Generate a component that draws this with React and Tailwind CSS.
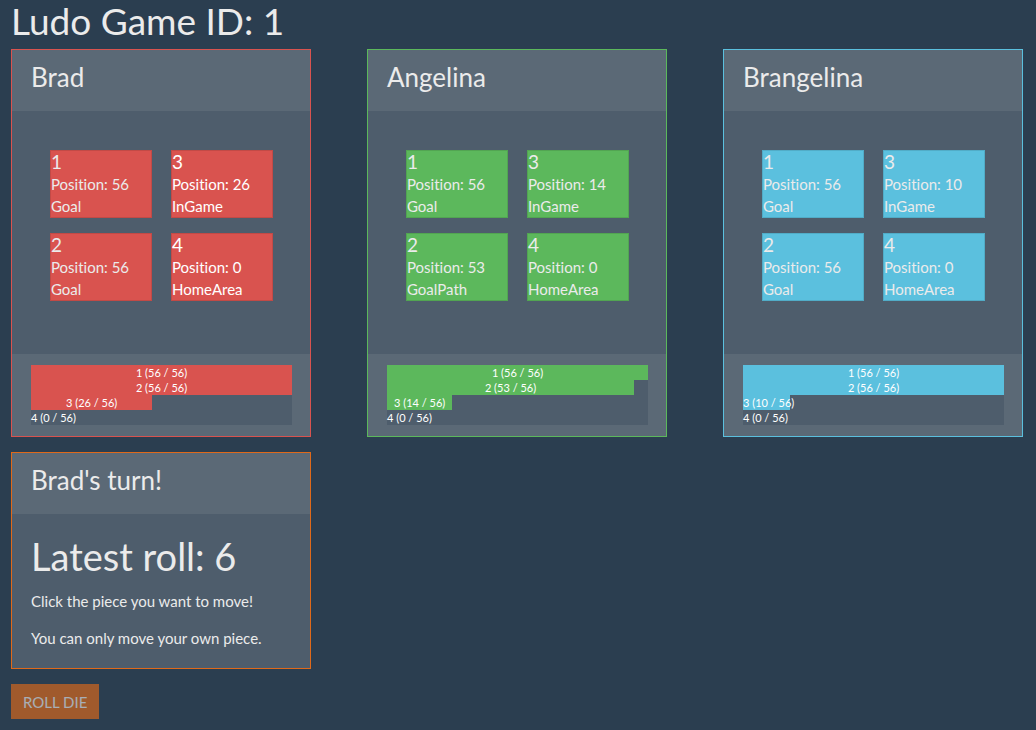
import React from "react";

const GOAL = 56;

const themes = {
  red: { border: "border-[#d9534f]", fill: "bg-[#d9534f]" },
  green: { border: "border-[#5cb85c]", fill: "bg-[#5cb85c]" },
  blue: { border: "border-[#5bc0de]", fill: "bg-[#5bc0de]" },
};

const players = [
  {
    name: "Brad",
    theme: themes.red,
    pieces: [
      { id: 1, position: 56, state: "Goal", movable: false },
      { id: 2, position: 56, state: "Goal", movable: false },
      { id: 3, position: 26, state: "InGame", movable: true },
      { id: 4, position: 0, state: "HomeArea", movable: true },
    ],
  },
  {
    name: "Angelina",
    theme: themes.green,
    pieces: [
      { id: 1, position: 56, state: "Goal", movable: false },
      { id: 2, position: 53, state: "GoalPath", movable: false },
      { id: 3, position: 14, state: "InGame", movable: false },
      { id: 4, position: 0, state: "HomeArea", movable: false },
    ],
  },
  {
    name: "Brangelina",
    theme: themes.blue,
    pieces: [
      { id: 1, position: 56, state: "Goal", movable: false },
      { id: 2, position: 56, state: "Goal", movable: false },
      { id: 3, position: 10, state: "InGame", movable: false },
      { id: 4, position: 0, state: "HomeArea", movable: false },
    ],
  },
];

function Card({ title, border, children }) {
  return (
    <section className={`border bg-[#4e5d6c] ${border}`}>
      <header className="bg-white/[0.075] px-[19px] pt-3 pb-[18px]">
        <h2 className="text-[26px] leading-[31px]">{title}</h2>
      </header>
      {children}
    </section>
  );
}

function Piece({ piece, fill }) {
  return (
    <button
      type="button"
      disabled={!piece.movable}
      className={`w-[102px] border border-black/10 text-left text-[15px] leading-[22px] ${fill} ${
        piece.movable ? "cursor-pointer text-white" : "text-[#ebebeb]"
      }`}
    >
      <span className="block text-[19px] leading-[22px]">{piece.id}</span>
      <span className="block">Position: {piece.position}</span>
      <span className="block">{piece.state}</span>
    </button>
  );
}

function ProgressRow({ piece, fill }) {
  return (
    <div
      role="progressbar"
      aria-label={`Piece ${piece.id}`}
      aria-valuemin={0}
      aria-valuemax={GOAL}
      aria-valuenow={piece.position}
      className="bg-[#4e5d6c]"
    >
      <div
        className={`text-center text-[11px] leading-[15px] whitespace-nowrap text-white ${fill}`}
        style={{ width: `${(piece.position / GOAL) * 100}%` }}
      >
        {piece.id} ({piece.position} / {GOAL})
      </div>
    </div>
  );
}

function PlayerCard({ player }) {
  const { border, fill } = player.theme;
  return (
    <Card title={player.name} border={border}>
      <div className="grid grid-flow-col grid-cols-[auto_auto] grid-rows-[auto_auto] justify-start gap-x-[19px] gap-y-[15px] px-[38px] pt-[39px] pb-[53px]">
        {player.pieces.map((piece) => (
          <Piece key={piece.id} piece={piece} fill={fill} />
        ))}
      </div>
      <footer className="bg-white/[0.075] py-[11px] pr-[18px] pl-[19px]">
        {player.pieces.map((piece) => (
          <ProgressRow key={piece.id} piece={piece} fill={fill} />
        ))}
      </footer>
    </Card>
  );
}

export default function App() {
  return (
    <main className="min-h-screen bg-[#2b3e50] pr-[13px] pb-[11px] pl-[11px] font-['Lato',sans-serif] text-[15px] leading-[22px] text-[#ebebeb] [font-variant-ligatures:none]">
      <h1 className="pb-[8px] text-[37px] leading-[41px]">Ludo Game ID: 1</h1>
      <div className="grid grid-cols-[repeat(auto-fill,300px)] justify-between gap-y-[15px]">
        {players.map((player) => (
          <PlayerCard key={player.name} player={player} />
        ))}
        <Card title="Brad's turn!" border="border-[#df691a]">
          <div className="px-[19px] pt-[22px] pb-[19px]">
            <p className="pb-[14px] text-[38px] leading-[40px]">Latest roll: 6</p>
            <p className="pb-[15px]">Click the piece you want to move!</p>
            <p>You can only move your own piece.</p>
          </div>
        </Card>
      </div>
      <button
        type="button"
        disabled
        className="mt-[15px] h-[35px] bg-[#df691a] px-3 text-[15px] text-[#ebebeb] opacity-65"
      >
        ROLL DIE
      </button>
    </main>
  );
}
